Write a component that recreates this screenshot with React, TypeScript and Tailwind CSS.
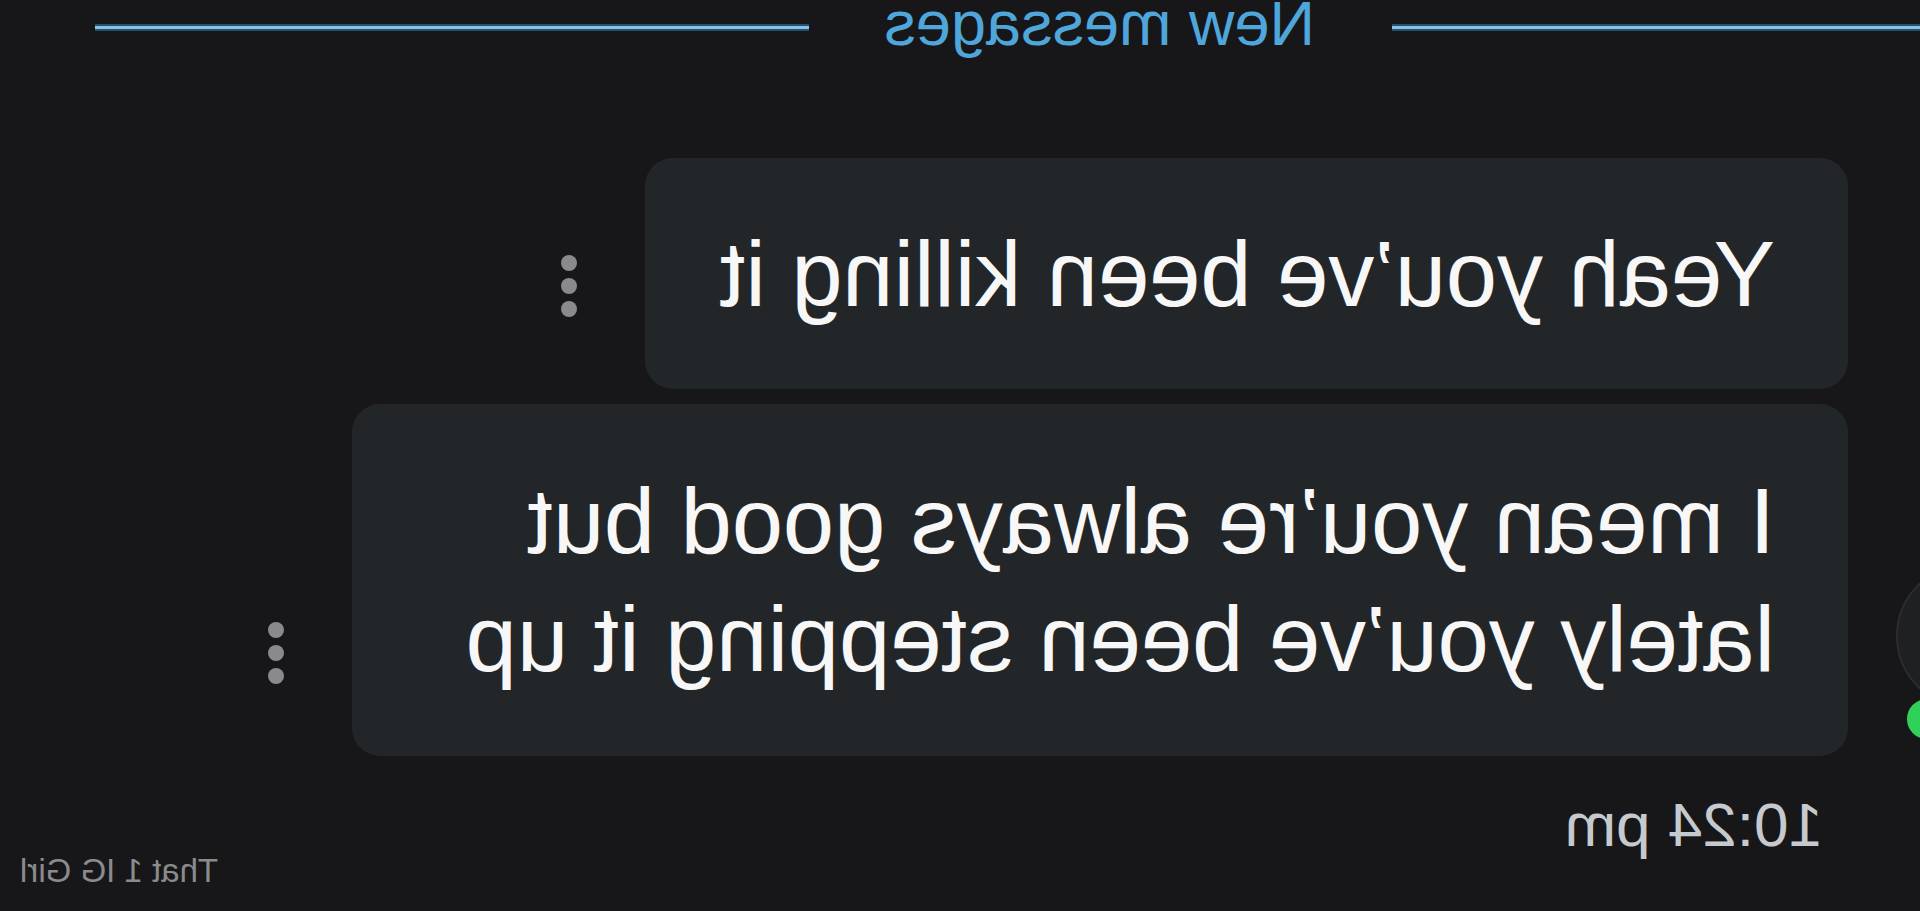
export default function App() {
  // the reference is a mirrored capture, so the whole screen is flipped
  return (
    <div className="relative w-[1920px] h-[911px] overflow-hidden bg-[#17171a] -scale-x-100 font-['Liberation_Sans',Arial,sans-serif]">
      {/* New messages divider */}
      <div className="flex items-start pr-[95px]">
        <div className="w-[528px] h-[7px] mt-[24px] bg-[#86c0e6] border-y-2 border-[#24506d]" />
        <span className="ml-[77px] -mt-[8px] text-[63px] leading-none text-[#4fa6da] whitespace-nowrap">New messages</span>
        <div className="flex-1 ml-[75px] h-[7px] mt-[24px] bg-[#86c0e6] border-y-2 border-[#24506d]" />
      </div>

      {/* Messages */}
      <div className="mt-[103px] pl-[72px] flex flex-col gap-[15px]">
        <div className="flex items-end">
          <div className="w-[1203px] h-[231px] flex items-center pl-[73px] rounded-[28px] bg-[#232628]">
            <p className="text-[92px] leading-[118px] text-[#f7f7f7] whitespace-nowrap">Yeah you’ve been killing it</p>
          </div>
          <Dots />
        </div>
        <div className="flex items-end">
          <div className="w-[1496px] h-[352px] flex items-center pl-[73px] rounded-[28px] bg-[#232628]">
            <p className="text-[92px] leading-[118px] text-[#f7f7f7] whitespace-nowrap">
              I mean you’re always good but
              <br />
              lately you’ve been stepping it up
            </p>
          </div>
          <Dots />
        </div>
      </div>

      <div className="mt-[38px] pl-[97px] text-[62px] leading-none text-[#c6c9cd]">10:24 pm</div>

      {/* avatar peeking in from the edge */}
      <div className="absolute left-[-120px] top-[564px] w-[144px] h-[144px] rounded-full bg-[#1e2022] border-2 border-[#2a2d30]" />
      <div className="absolute left-[-30px] top-[696px] w-[46px] h-[46px] rounded-full bg-[#2fd158] border-[3px] border-[#17171a]" />

      <span className="absolute right-[20px] bottom-[24px] text-[33px] leading-none text-[#8b8b8d]">That 1 IG Girl</span>
    </div>
  );
}

function Dots() {
  return (
    <div className="ml-[68px] mb-[72px] flex flex-col gap-[7px]">
      <span className="w-4 h-4 rounded-full bg-[#8a8a8d]" />
      <span className="w-4 h-4 rounded-full bg-[#8a8a8d]" />
      <span className="w-4 h-4 rounded-full bg-[#8a8a8d]" />
    </div>
  );
}
